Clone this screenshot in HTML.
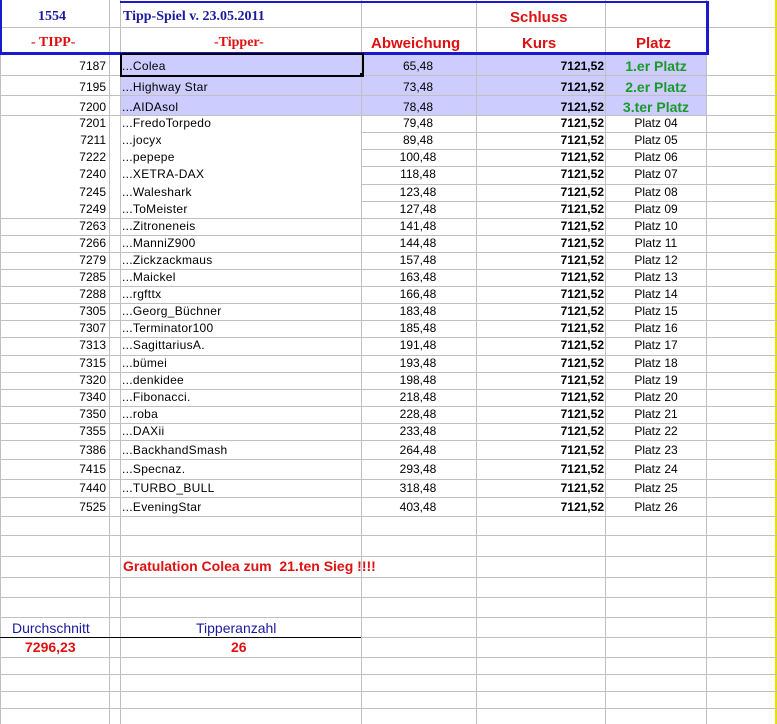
<!DOCTYPE html>
<html><head><meta charset="utf-8"><style>
body{margin:0;width:777px;height:724px;background:#fff;position:relative;overflow:hidden;font-family:"Liberation Sans",Arial,sans-serif;font-size:12px;color:#000}
.h{position:absolute;height:1px;background:#c0c0c0}
.v{position:absolute;width:1px;background:#c0c0c0;top:0;height:724px}
.r{position:absolute;left:0;width:777px;height:17px;line-height:17px}
.r span{position:absolute;white-space:nowrap}
.a{right:671px;text-align:right}
.n{left:122px;letter-spacing:0.3px}
.d{left:380px;width:76px;text-align:center}
.k{right:173px;font-weight:bold}
.p{left:606px;width:100px;text-align:center}
.g{color:#1a9a2a;font-weight:bold;font-size:14px}
.t{position:absolute;white-space:nowrap}
</style></head><body>
<div style="position:absolute;left:121px;top:53px;width:586px;height:62px;background:#ccccff"></div>
<div class="v" style="left:0"></div>
<div class="v" style="left:109px"></div>
<div class="v" style="left:120px"></div>
<div class="v" style="left:361px"></div>
<div class="v" style="left:476px"></div>
<div class="v" style="left:605px"></div>
<div class="v" style="left:706px"></div>
<div class="v" style="left:775px;background:#e8e000;width:2px"></div>
<div class="h" style="top:27px;left:0;width:777px"></div>
<div class="h" style="top:75px;left:0;width:777px"></div>
<div class="h" style="top:95px;left:0;width:777px"></div>
<div class="h" style="top:115px;left:0;width:777px"></div>
<div class="h" style="top:132px;left:361px;width:416px"></div>
<div class="h" style="top:149px;left:361px;width:416px"></div>
<div class="h" style="top:166px;left:361px;width:416px"></div>
<div class="h" style="top:184px;left:361px;width:416px"></div>
<div class="h" style="top:201px;left:361px;width:416px"></div>
<div class="h" style="top:218px;left:0;width:777px"></div>
<div class="h" style="top:235px;left:0;width:777px"></div>
<div class="h" style="top:252px;left:0;width:777px"></div>
<div class="h" style="top:269px;left:0;width:777px"></div>
<div class="h" style="top:286px;left:0;width:777px"></div>
<div class="h" style="top:303px;left:0;width:777px"></div>
<div class="h" style="top:320px;left:0;width:777px"></div>
<div class="h" style="top:337px;left:0;width:777px"></div>
<div class="h" style="top:355px;left:0;width:777px"></div>
<div class="h" style="top:372px;left:0;width:777px"></div>
<div class="h" style="top:389px;left:0;width:777px"></div>
<div class="h" style="top:406px;left:0;width:777px"></div>
<div class="h" style="top:423px;left:0;width:777px"></div>
<div class="h" style="top:440px;left:0;width:777px"></div>
<div class="h" style="top:459px;left:0;width:777px"></div>
<div class="h" style="top:479px;left:0;width:777px"></div>
<div class="h" style="top:497px;left:0;width:777px"></div>
<div class="h" style="top:516px;left:0;width:777px"></div>
<div class="h" style="top:535px;left:0;width:777px"></div>
<div class="h" style="top:556px;left:0;width:777px"></div>
<div class="h" style="top:577px;left:0;width:777px"></div>
<div class="h" style="top:597px;left:0;width:777px"></div>
<div class="h" style="top:617px;left:0;width:777px"></div>
<div class="h" style="top:637px;left:0;width:777px"></div>
<div class="h" style="top:657px;left:0;width:777px"></div>
<div class="h" style="top:674px;left:0;width:777px"></div>
<div class="h" style="top:691px;left:0;width:777px"></div>
<div class="h" style="top:708px;left:0;width:777px"></div>
<div style="position:absolute;left:0;top:637px;width:361px;height:1px;background:#000"></div>
<div style="position:absolute;left:120px;top:1px;width:589px;height:2px;background:#1a1acc"></div>
<div style="position:absolute;left:0;top:0;width:2px;height:54px;background:#1a1acc"></div>
<div style="position:absolute;left:706px;top:1px;width:3px;height:54px;background:#1a1acc"></div>
<div style="position:absolute;left:0;top:52px;width:709px;height:3px;background:#1a1acc"></div>
<div style="position:absolute;left:120px;top:53px;width:240px;height:20px;border:2px solid #000"></div>
<div style="position:absolute;left:360px;top:73px;width:4px;height:4px;background:#000"></div>
<div class="t" style="left:38px;top:9px;font:bold 14px 'Liberation Serif',serif;color:#1a1aa0">1554</div>
<div class="t" style="left:123px;top:9px;font:bold 14px 'Liberation Serif',serif;color:#1a1aa0">Tipp-Spiel v. 23.05.2011</div>
<div class="t" style="left:31px;top:35px;font:bold 14px 'Liberation Serif',serif;color:#dd1111">- TIPP-</div>
<div class="t" style="left:214px;top:35px;font:bold 14px 'Liberation Serif',serif;color:#dd1111">-Tipper-</div>
<div class="t" style="left:510px;top:9px;font:bold 15px 'Liberation Sans',sans-serif;color:#dd1111">Schluss</div>
<div class="t" style="left:371px;top:35px;font:bold 15px 'Liberation Sans',sans-serif;color:#dd1111">Abweichung</div>
<div class="t" style="left:522px;top:35px;font:bold 15px 'Liberation Sans',sans-serif;color:#dd1111">Kurs</div>
<div class="t" style="left:636px;top:35px;font:bold 15px 'Liberation Sans',sans-serif;color:#dd1111">Platz</div>
<div class="r" style="top:56px;height:20px;line-height:20px"><span class="a">7187</span><span class="n">...Colea</span><span class="d">65,48</span><span class="k">7121,52</span><span class="p g">1.er Platz</span></div>
<div class="r" style="top:77px;height:20px;line-height:20px"><span class="a">7195</span><span class="n">...Highway Star</span><span class="d">73,48</span><span class="k">7121,52</span><span class="p g">2.er Platz</span></div>
<div class="r" style="top:97px;height:20px;line-height:20px"><span class="a">7200</span><span class="n">...AIDAsol</span><span class="d">78,48</span><span class="k">7121,52</span><span class="p g">3.ter Platz</span></div>
<div class="r" style="top:115px"><span class="a">7201</span><span class="n">...FredoTorpedo</span><span class="d">79,48</span><span class="k">7121,52</span><span class="p">Platz 04</span></div>
<div class="r" style="top:132px"><span class="a">7211</span><span class="n">...jocyx</span><span class="d">89,48</span><span class="k">7121,52</span><span class="p">Platz 05</span></div>
<div class="r" style="top:149px"><span class="a">7222</span><span class="n">...pepepe</span><span class="d">100,48</span><span class="k">7121,52</span><span class="p">Platz 06</span></div>
<div class="r" style="top:166px"><span class="a">7240</span><span class="n">...XETRA-DAX</span><span class="d">118,48</span><span class="k">7121,52</span><span class="p">Platz 07</span></div>
<div class="r" style="top:184px"><span class="a">7245</span><span class="n">...Waleshark</span><span class="d">123,48</span><span class="k">7121,52</span><span class="p">Platz 08</span></div>
<div class="r" style="top:201px"><span class="a">7249</span><span class="n">...ToMeister</span><span class="d">127,48</span><span class="k">7121,52</span><span class="p">Platz 09</span></div>
<div class="r" style="top:218px"><span class="a">7263</span><span class="n">...Zitroneneis</span><span class="d">141,48</span><span class="k">7121,52</span><span class="p">Platz 10</span></div>
<div class="r" style="top:235px"><span class="a">7266</span><span class="n">...ManniZ900</span><span class="d">144,48</span><span class="k">7121,52</span><span class="p">Platz 11</span></div>
<div class="r" style="top:252px"><span class="a">7279</span><span class="n">...Zickzackmaus</span><span class="d">157,48</span><span class="k">7121,52</span><span class="p">Platz 12</span></div>
<div class="r" style="top:269px"><span class="a">7285</span><span class="n">...Maickel</span><span class="d">163,48</span><span class="k">7121,52</span><span class="p">Platz 13</span></div>
<div class="r" style="top:286px"><span class="a">7288</span><span class="n">...rgfttx</span><span class="d">166,48</span><span class="k">7121,52</span><span class="p">Platz 14</span></div>
<div class="r" style="top:303px"><span class="a">7305</span><span class="n">...Georg_Büchner</span><span class="d">183,48</span><span class="k">7121,52</span><span class="p">Platz 15</span></div>
<div class="r" style="top:320px"><span class="a">7307</span><span class="n">...Terminator100</span><span class="d">185,48</span><span class="k">7121,52</span><span class="p">Platz 16</span></div>
<div class="r" style="top:337px"><span class="a">7313</span><span class="n">...SagittariusA.</span><span class="d">191,48</span><span class="k">7121,52</span><span class="p">Platz 17</span></div>
<div class="r" style="top:355px"><span class="a">7315</span><span class="n">...bümei</span><span class="d">193,48</span><span class="k">7121,52</span><span class="p">Platz 18</span></div>
<div class="r" style="top:372px"><span class="a">7320</span><span class="n">...denkidee</span><span class="d">198,48</span><span class="k">7121,52</span><span class="p">Platz 19</span></div>
<div class="r" style="top:389px"><span class="a">7340</span><span class="n">...Fibonacci.</span><span class="d">218,48</span><span class="k">7121,52</span><span class="p">Platz 20</span></div>
<div class="r" style="top:406px"><span class="a">7350</span><span class="n">...roba</span><span class="d">228,48</span><span class="k">7121,52</span><span class="p">Platz 21</span></div>
<div class="r" style="top:423px"><span class="a">7355</span><span class="n">...DAXii</span><span class="d">233,48</span><span class="k">7121,52</span><span class="p">Platz 22</span></div>
<div class="r" style="top:441px;height:18px;line-height:18px"><span class="a">7386</span><span class="n">...BackhandSmash</span><span class="d">264,48</span><span class="k">7121,52</span><span class="p">Platz 23</span></div>
<div class="r" style="top:460px;height:19px;line-height:19px"><span class="a">7415</span><span class="n">...Specnaz.</span><span class="d">293,48</span><span class="k">7121,52</span><span class="p">Platz 24</span></div>
<div class="r" style="top:479px;height:18px;line-height:18px"><span class="a">7440</span><span class="n">...TURBO_BULL</span><span class="d">318,48</span><span class="k">7121,52</span><span class="p">Platz 25</span></div>
<div class="r" style="top:498px;height:18px;line-height:18px"><span class="a">7525</span><span class="n">...EveningStar</span><span class="d">403,48</span><span class="k">7121,52</span><span class="p">Platz 26</span></div>
<div class="t" style="left:123px;top:558px;font:bold 14px 'Liberation Sans',sans-serif;color:#dd1111">Gratulation Colea zum&nbsp; 21.ten Sieg !!!!</div>
<div class="t" style="left:12px;top:620px;font-size:14px;color:#1a1aa0">Durchschnitt</div>
<div class="t" style="left:196px;top:620px;font-size:14px;color:#1a1aa0">Tipperanzahl</div>
<div class="t" style="left:25px;top:639px;font:bold 14px 'Liberation Sans',sans-serif;color:#dd1111">7296,23</div>
<div class="t" style="left:231px;top:639px;font:bold 14px 'Liberation Sans',sans-serif;color:#dd1111">26</div>
</body></html>
